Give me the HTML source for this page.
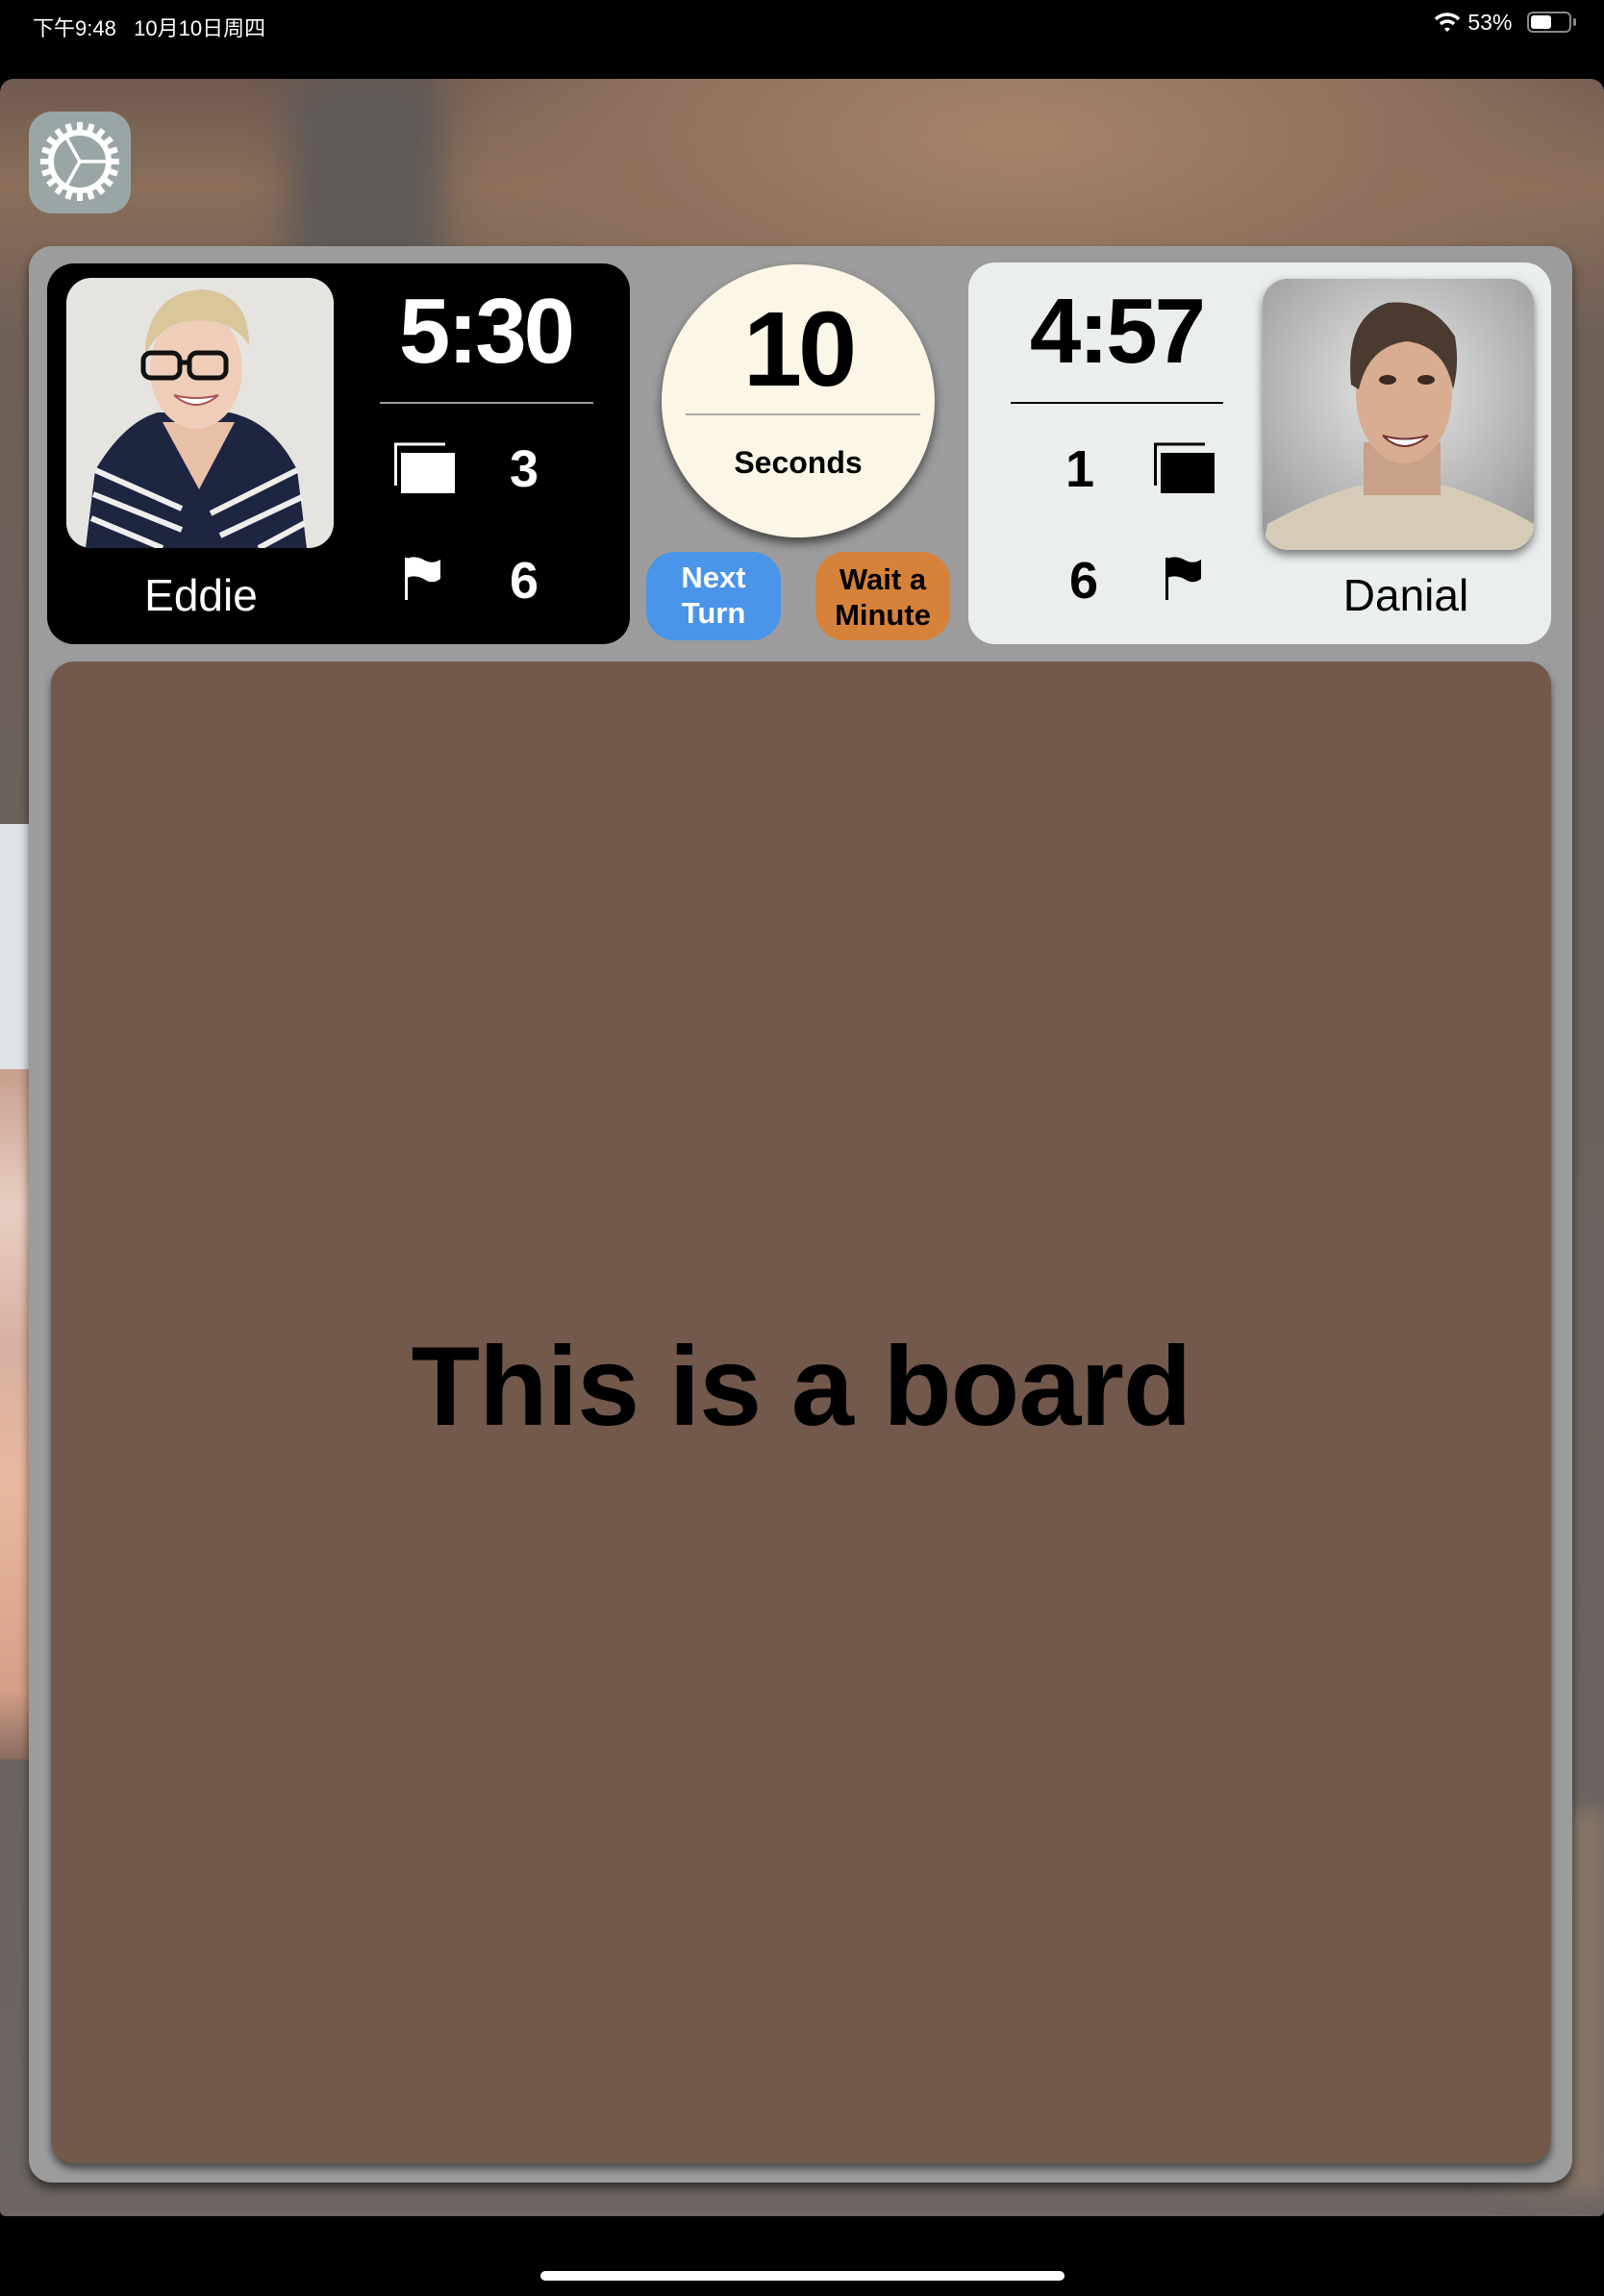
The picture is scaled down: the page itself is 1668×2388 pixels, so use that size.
<!DOCTYPE html>
<html><head><meta charset="utf-8"><style>
*{margin:0;padding:0;box-sizing:border-box}
body{width:1668px;height:2388px;background:#000;position:relative;overflow:hidden;font-family:"Liberation Sans","Noto Sans CJK SC",sans-serif}
.abs{position:absolute}
#bg{left:0;top:82px;width:1668px;height:2223px;border-radius:14px 14px 6px 6px;overflow:hidden;
background:linear-gradient(180deg,#6e5a50 0%,#8a6e58 5%,#6e6058 12%,#6a615c 40%,#6b6360 80%,#6d6662 100%)}
.t{color:#fff;font-weight:bold;text-align:center;position:absolute}
</style></head><body>
<div class="abs" style="left:34px;top:12px;color:#fff;font-size:22px;">下午9:48&nbsp;&nbsp;&nbsp;10月10日周四</div>
<div class="abs" style="left:1490px;top:10px;color:#fff;font-size:23px;">
<svg width="30" height="24" viewBox="0 0 30 24" style="vertical-align:-4px"><path d="M3 9 A17 17 0 0 1 27 9" stroke="#fff" stroke-width="3.5" fill="none"/><path d="M8 14 A10 10 0 0 1 22 14" stroke="#fff" stroke-width="3.5" fill="none"/><path d="M12 19 L15 22 L18 19 A4 4 0 0 0 12 19Z" fill="#fff"/></svg> 53%</div>
<div class="abs" style="left:1588px;top:12px;width:46px;height:22px;border:2px solid #888;border-radius:6px;"><div style="margin:2px;width:21px;height:14px;background:#fff;border-radius:3px"></div></div>
<div class="abs" style="left:1636px;top:19px;width:3px;height:8px;background:#888;border-radius:2px"></div>

<div id="bg" class="abs">
 <div class="abs" style="left:450px;top:0;width:1218px;height:300px;background:radial-gradient(ellipse at 50% 20%,#a4836a 0%,#8f725d 45%,rgba(110,96,88,0) 80%)"></div>
 <div class="abs" style="left:300px;top:0;width:160px;height:250px;background:#5e5a58;filter:blur(20px)"></div>
 <div class="abs" style="left:0;top:775px;width:40px;height:255px;background:#dfe4e6"></div>
 <div class="abs" style="left:0;top:1030px;width:40px;height:718px;background:linear-gradient(180deg,#c89f8c,#e8cfc3 20%,#d8b0a0 40%,#eab8a0 60%,#d49f88 90%,#8a6c60)"></div>
 <div class="abs" style="left:1540px;top:1800px;width:128px;height:400px;background:linear-gradient(90deg,rgba(0,0,0,0),#8a7868);filter:blur(10px)"></div>
</div>

<!-- settings -->
<div class="abs" style="left:30px;top:116px;width:106px;height:106px;background:#9aa6a6;border-radius:24px">
<svg width="106" height="106" viewBox="0 0 106 106">
<g transform="translate(53,52)" fill="#fff">
<circle r="30" fill="none" stroke="#fff" stroke-width="6"/>
<g id="tooth"><rect x="-3" y="-41" width="6" height="11"/></g>
<use href="#tooth" transform="rotate(18)"/><use href="#tooth" transform="rotate(36)"/><use href="#tooth" transform="rotate(54)"/><use href="#tooth" transform="rotate(72)"/><use href="#tooth" transform="rotate(90)"/><use href="#tooth" transform="rotate(108)"/><use href="#tooth" transform="rotate(126)"/><use href="#tooth" transform="rotate(144)"/><use href="#tooth" transform="rotate(162)"/><use href="#tooth" transform="rotate(180)"/><use href="#tooth" transform="rotate(198)"/><use href="#tooth" transform="rotate(216)"/><use href="#tooth" transform="rotate(234)"/><use href="#tooth" transform="rotate(252)"/><use href="#tooth" transform="rotate(270)"/><use href="#tooth" transform="rotate(288)"/><use href="#tooth" transform="rotate(306)"/><use href="#tooth" transform="rotate(324)"/><use href="#tooth" transform="rotate(342)"/>
<path d="M0 0 L29 0 M0 0 L-14 -25 M0 0 L-14 25" stroke="#fff" stroke-width="3.5"/>
</g></svg></div>

<!-- panel -->
<div class="abs" style="left:30px;top:256px;width:1605px;height:2014px;background:#9c9c9c;border-radius:24px;box-shadow:0 6px 10px rgba(0,0,0,.55)"></div>

<!-- Eddie card -->
<div class="abs" style="left:49px;top:274px;width:606px;height:396px;background:#000;border-radius:28px"></div>
<svg class="abs" style="left:69px;top:289px" width="278" height="281" viewBox="0 0 278 281">
<defs><clipPath id="c1"><rect width="278" height="281" rx="26"/></clipPath></defs>
<g clip-path="url(#c1)">
<rect width="278" height="281" fill="#e6e4e0"/>
<path d="M20 281 L30 200 Q60 150 95 140 L170 140 Q215 150 240 200 L250 281Z" fill="#1e2540"/>
<g stroke="#eee" stroke-width="6" fill="none"><path d="M30 200 L120 240"/><path d="M28 225 L120 262"/><path d="M26 250 L100 281"/><path d="M240 200 L150 245"/><path d="M245 228 L160 268"/><path d="M248 255 L200 281"/></g>
<path d="M100 150 L138 220 L175 150Z" fill="#e8c0a8"/>
<ellipse cx="135" cy="95" rx="48" ry="62" fill="#efcdb8"/>
<path d="M82 70 Q90 15 140 12 Q190 15 190 70 Q170 40 130 45 Q100 45 82 80Z" fill="#d8c79a"/>
<g stroke="#111" stroke-width="5" fill="none"><rect x="80" y="78" width="38" height="26" rx="8"/><rect x="128" y="78" width="38" height="26" rx="8"/><path d="M118 88 L128 88"/></g>
<path d="M112 122 Q135 142 158 122 Q135 128 112 122Z" fill="#fff" stroke="#a55" stroke-width="2"/>
</g></svg>
<div class="t" style="left:330px;top:290px;width:350px;font-size:96px;letter-spacing:-3px;line-height:110px">5:30</div>
<div class="abs" style="left:395px;top:418px;width:222px;height:2px;background:#999"></div>
<svg class="abs" style="left:408px;top:460px" width="70" height="58"><path d="M2 2 H55 M3.5 2 V45" stroke="#fff" stroke-width="3" fill="none"/><rect x="9" y="11" width="56" height="42" fill="#fff"/></svg>
<div class="t" style="left:505px;top:458px;width:80px;font-size:54px;line-height:60px">3</div>
<svg class="abs" style="left:418px;top:578px" width="44" height="48"><rect x="3" y="2" width="3" height="44" fill="#fff"/><path d="M5 3 Q14 -1 24 5 Q32 9 40 4 L40 24 Q32 30 24 25 Q14 19 5 23Z" fill="#fff"/></svg>
<div class="t" style="left:505px;top:574px;width:80px;font-size:54px;line-height:60px">6</div>
<div class="abs" style="left:109px;top:592px;width:200px;text-align:center;color:#fff;font-size:46px;line-height:54px">Eddie</div>

<!-- circle -->
<div class="abs" style="left:688px;top:275px;width:284px;height:284px;border-radius:50%;background:#fbf6e6;box-shadow:0 6px 10px rgba(0,0,0,.55)"></div>
<div class="abs" style="left:688px;top:304px;width:284px;text-align:center;font-weight:bold;font-size:110px;line-height:120px;color:#000;letter-spacing:-4px">10</div>
<div class="abs" style="left:713px;top:430px;width:244px;height:2px;background:#aaa"></div>
<div class="abs" style="left:688px;top:461px;width:284px;text-align:center;font-weight:bold;font-size:32px;line-height:40px;color:#000">Seconds</div>

<!-- buttons -->
<div class="abs" style="left:672px;top:574px;width:140px;height:92px;border-radius:30px;background:#4a94ea;color:#fff;font-weight:bold;font-size:31px;line-height:37px;text-align:center;padding-top:8px">Next<br>Turn</div>
<div class="abs" style="left:848px;top:574px;width:140px;height:92px;border-radius:30px;background:#d7823b;color:#000;font-weight:bold;font-size:31px;line-height:37px;text-align:center;padding-top:10px">Wait a<br>Minute</div>

<!-- Danial card -->
<div class="abs" style="left:1007px;top:273px;width:606px;height:397px;background:#ebeeee;border-radius:28px"></div>
<div class="t" style="left:986px;top:290px;width:350px;font-size:96px;letter-spacing:-3px;line-height:110px;color:#000">4:57</div>
<div class="abs" style="left:1051px;top:418px;width:221px;height:2px;background:#000"></div>
<div class="t" style="left:1083px;top:458px;width:80px;font-size:54px;line-height:60px;color:#000">1</div>
<svg class="abs" style="left:1198px;top:460px" width="70" height="58"><path d="M2 2 H55 M3.5 2 V45" stroke="#000" stroke-width="3" fill="none"/><rect x="9" y="11" width="56" height="42" fill="#000"/></svg>
<div class="t" style="left:1087px;top:574px;width:80px;font-size:54px;line-height:60px;color:#000">6</div>
<svg class="abs" style="left:1209px;top:578px" width="44" height="48"><rect x="3" y="2" width="3" height="44" fill="#000"/><path d="M5 3 Q14 -1 24 5 Q32 9 40 4 L40 24 Q32 30 24 25 Q14 19 5 23Z" fill="#000"/></svg>
<div class="abs" style="left:1362px;top:592px;width:200px;text-align:center;color:#000;font-size:46px;line-height:54px">Danial</div>
<svg class="abs" style="left:1313px;top:290px;filter:drop-shadow(0 5px 5px rgba(0,0,0,.5))" width="282" height="282" viewBox="0 0 282 282">
<defs><clipPath id="c2"><rect width="282" height="282" rx="26"/></clipPath><radialGradient id="g2" cx="50%" cy="40%" r="70%"><stop offset="0" stop-color="#e8e8e8"/><stop offset="1" stop-color="#9a9a9a"/></radialGradient></defs>
<g clip-path="url(#c2)">
<rect width="282" height="282" fill="url(#g2)"/>
<path d="M0 282 L5 255 Q60 225 100 215 L190 215 Q240 230 282 255 L282 282Z" fill="#d6cbb8"/>
<rect x="105" y="170" width="80" height="55" fill="#c9a088"/>
<ellipse cx="147" cy="120" rx="50" ry="72" fill="#d8ad92"/>
<path d="M92 110 Q85 40 130 25 Q175 20 200 60 Q205 90 198 115 Q190 70 150 65 Q110 70 100 115Z" fill="#4a3a30"/>
<ellipse cx="130" cy="105" rx="9" ry="5" fill="#3a2a22"/><ellipse cx="170" cy="105" rx="9" ry="5" fill="#3a2a22"/>
<path d="M125 163 Q147 185 172 163 Q147 170 125 163Z" fill="#fff" stroke="#733" stroke-width="2"/>
</g></svg>

<!-- board -->
<div class="abs" style="left:53px;top:688px;width:1560px;height:1562px;background:#73584c;border-radius:24px;box-shadow:0 6px 8px rgba(0,0,0,.5)"></div>
<div class="abs" style="left:53px;top:1372px;width:1560px;text-align:center;font-weight:bold;font-size:117px;line-height:140px;color:#000;letter-spacing:-1px">This is a board</div>

<div class="abs" style="left:562px;top:2362px;width:545px;height:10px;background:#fff;border-radius:5px"></div>
</body></html>
